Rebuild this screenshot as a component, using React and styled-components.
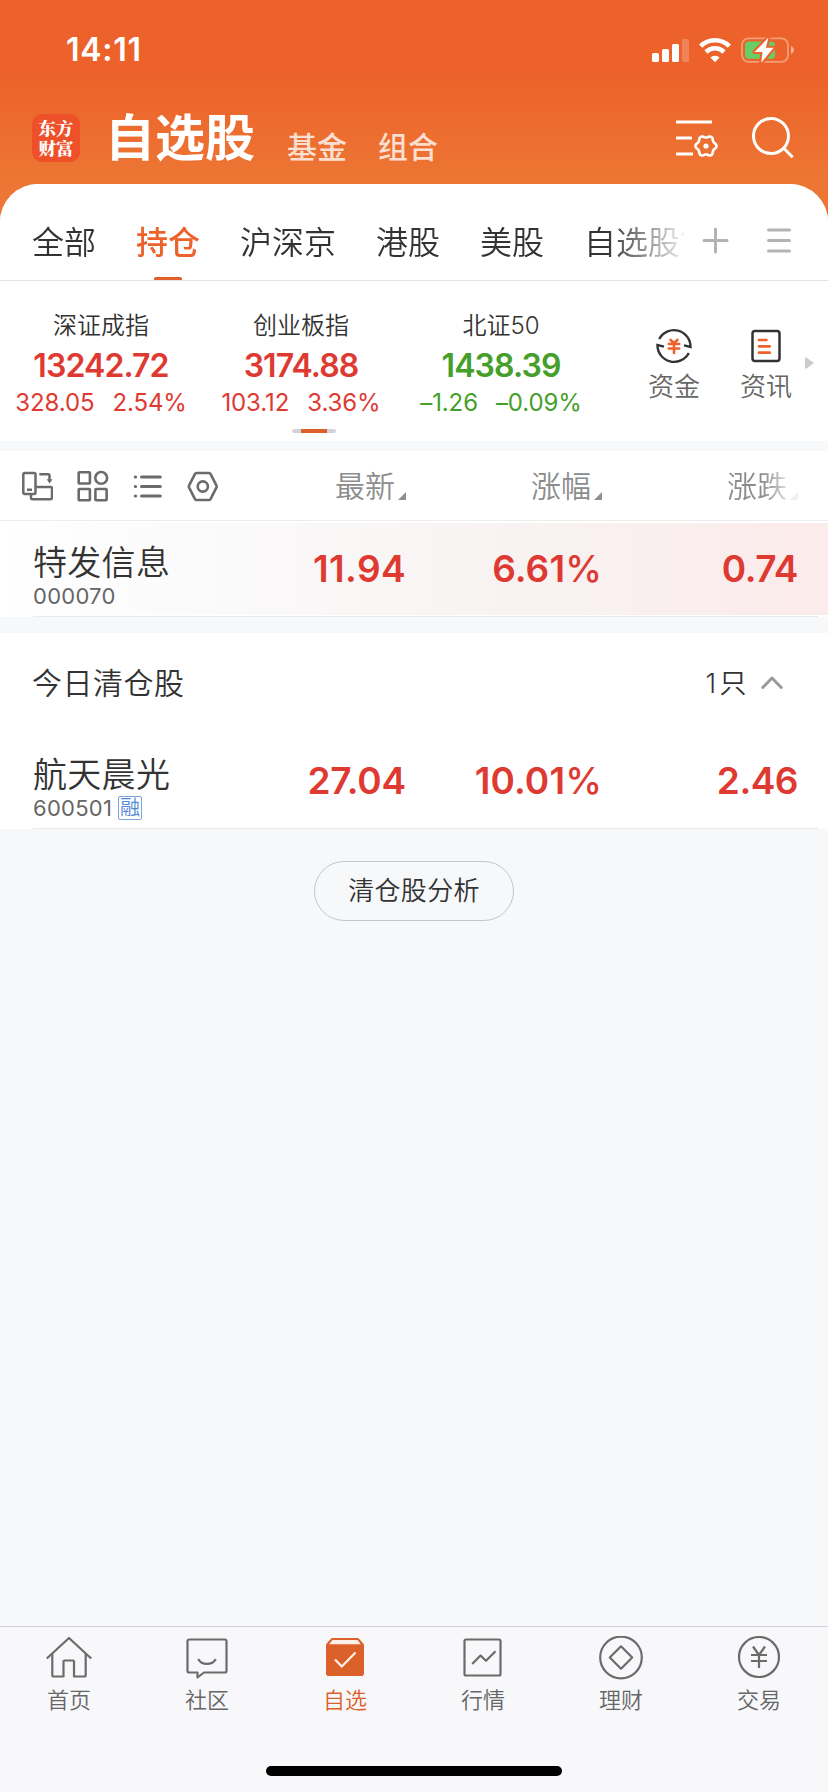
import React from "react";
import styled, { createGlobalStyle } from "styled-components";

const RED = "#de3a32";
const GREEN = "#469f2b";
const ORANGE = "#ec622a";

const GlobalStyle = createGlobalStyle`
  * { box-sizing: border-box; }
  body {
    margin: 0;
    background: #f7f8fa;
    font-family: Inter, "Noto Sans CJK SC", sans-serif;
    color: #333;
  }
  svg { display: block; flex: none; }
`;

const Screen = styled.div`
  width: 828px;
  height: 1792px;
  overflow: hidden;
  display: flex;
  flex-direction: column;
  background: linear-gradient(180deg, #ec622a 0, #ec622a 75px, #ed7634 180px, #ed7634 240px, #f7f8fa 240px);
`;

const StatusBar = styled.div`
  height: 99px;
  padding: 0 34px 0 66px;
  display: flex;
  align-items: center;
  justify-content: space-between;
`;

const Clock = styled.div`
  font-size: 32px;
  line-height: 40px;
  font-weight: 560;
  letter-spacing: 0.7px;
  padding-top: 1px;
  color: #fff;
`;

const StatusIcons = styled.div`
  display: flex;
  align-items: center;
  gap: 10px;
`;

const Header = styled.header`
  height: 85px;
  padding: 0 34px 7px 32px;
  display: flex;
  align-items: center;
`;

const Logo = styled.div`
  width: 48px;
  height: 48px;
  border-radius: 10px;
  background: #ee5029;
  color: #fff;
  font: 900 17.5px/20px "Noto Serif CJK SC", "Noto Sans CJK SC", serif;
  text-align: center;
  padding-top: 4px;
`;

const PageTitle = styled.h1`
  margin: 0 0 0 25px;
  font-size: 50px;
  line-height: 60px;
  font-weight: 700;
  color: #fff;
`;

const HeaderLink = styled.a`
  margin-left: ${(p) => p.$gap}px;
  padding-top: 18px;
  font-size: 30px;
  line-height: 40px;
  font-weight: 500;
  color: rgba(255, 255, 255, 0.78);
`;

const HeaderActions = styled.div`
  margin-left: auto;
  display: flex;
  align-items: center;
  gap: 34px;
`;

const Sheet = styled.main`
  flex: 1;
  border-radius: 38px 38px 0 0;
  background: #f7f8fa;
  overflow: hidden;
`;

const TabRow = styled.nav`
  height: 97px;
  display: flex;
  background: #fff;
  border-bottom: 1px solid #e3e3e3;
`;

const TabList = styled.div`
  width: 684px;
  padding-left: 32px;
  display: flex;
  gap: 40px;
  overflow: hidden;
  white-space: nowrap;
  mask-image: linear-gradient(90deg, #000 606px, transparent 692px);
`;

const Tab = styled.div`
  position: relative;
  flex: none;
  height: 97px;
  font-size: 32px;
  line-height: 117px;
  font-weight: ${(p) => (p.$active ? 500 : 350)};
  color: ${(p) => (p.$active ? ORANGE : "#333")};
  &::after {
    content: "";
    display: ${(p) => (p.$active ? "block" : "none")};
    position: absolute;
    left: 18px;
    bottom: 0;
    width: 28px;
    height: 4px;
    border-radius: 2px 2px 0 0;
    background: #e0602a;
  }
`;

const TabTools = styled.div`
  display: flex;
  align-items: center;
  gap: 38px;
  padding: 16px 0 0 18px;
`;

const IndexStrip = styled.section`
  height: 160px;
  display: flex;
  background: #fff;
`;

const IndexList = styled.div`
  width: 628px;
  display: grid;
  grid-template-columns: 200px 200px 200px;
  grid-template-rows: 148px 4px;
  padding-left: 1px;
`;

const IndexCard = styled.div`
  padding-top: 29px;
  display: flex;
  flex-direction: column;
  align-items: center;
  color: ${(p) => (p.$down ? GREEN : RED)};
`;

const IndexName = styled.div`
  font-size: 24px;
  line-height: 32px;
  font-weight: 350;
  color: #333;
`;

const IndexValue = styled.div`
  margin-top: 4px;
  font-size: 32px;
  line-height: 40px;
  font-weight: 600;
  letter-spacing: -0.9px;
`;

const IndexChange = styled.div`
  margin-top: 1px;
  display: flex;
  gap: 18px;
  font-size: 24px;
  line-height: 32px;
  font-weight: 390;
  letter-spacing: -0.1px;
`;

const Pager = styled.div`
  grid-column: 1 / -1;
  margin-left: 291px;
  width: 44px;
  height: 4px;
  border-radius: 2px;
  background: linear-gradient(90deg, #d3d3dc 9px, #dc6029 9px, #dc6029 35px, #d3d3dc 35px);
`;

const Shortcuts = styled.div`
  display: flex;
  align-items: center;
  padding-top: 9px;
`;

const Shortcut = styled.div`
  width: 92px;
  display: flex;
  flex-direction: column;
  align-items: center;
  gap: 4px;
  font-size: 26px;
  line-height: 36px;
  font-weight: 350;
  color: #666;
`;

const ArrowSlot = styled.div`
  margin-left: -8px;
  display: flex;
  align-items: center;
  padding-top: 4px;
`;

const Divider = styled.div`
  height: ${(p) => p.$size}px;
  background: #f6f8fa;
`;

const columns = "210px 196px 196px 196px";

const TableHead = styled.div`
  height: 70px;
  display: grid;
  grid-template-columns: ${columns};
  align-items: center;
  background: #fff;
  border-bottom: 1px solid #ececec;
`;

const ViewTools = styled.div`
  display: flex;
  align-items: center;
  gap: 24px;
  padding-left: 21px;
`;

const HeadCell = styled.div`
  display: flex;
  align-items: center;
  justify-content: flex-end;
  gap: 3px;
  font-size: 30px;
  line-height: 40px;
  padding-top: 1px;
  font-weight: 350;
  color: #8c8c8c;
  mask-image: ${(p) => (p.$fade ? "linear-gradient(90deg, #000 160px, rgba(0,0,0,0.12) 192px)" : "none")};
  &::after {
    content: "";
    margin-top: 20px;
    border-left: 8px solid transparent;
    border-bottom: 8px solid #8f8f94;
  }
`;

const StockRow = styled.div`
  height: 96px;
  padding: 2px 0 1px;
  background: #fff;
`;

const StockBody = styled.div`
  height: 92px;
  display: grid;
  grid-template-columns: ${columns};
  align-items: center;
  background: ${(p) => (p.$highlight ? "linear-gradient(90deg, #fff 0, #faf8f8 35%, #f8f3f2 62%, #fbecec 93%, #fbebea 100%)" : "#fff")};
`;

const RowRule = styled.div`
  height: 1px;
  margin: 1px 10px 0 33px;
  background: #eaeaea;
`;

const StockInfo = styled.div`
  padding: 13px 0 0 33px;
  white-space: nowrap;
`;

const StockName = styled.div`
  font-size: 34px;
  line-height: 40px;
  font-weight: 350;
  letter-spacing: 0.3px;
`;

const StockCode = styled.div`
  height: 26px;
  display: flex;
  align-items: center;
  gap: 6px;
  font-size: 22px;
  line-height: 26px;
  font-weight: 400;
  letter-spacing: 0.25px;
  color: #666;
`;

const MarginBadge = styled.span`
  width: 24px;
  height: 24px;
  border: 1px solid #7ba4e0;
  border-radius: 2px;
  font-size: 20px;
  line-height: 22px;
  font-weight: 350;
  letter-spacing: 0;
  color: #4f86d8;
  display: flex;
  justify-content: center;
`;

const Quote = styled.div`
  text-align: right;
  font-size: 37px;
  line-height: 44px;
  font-weight: 600;
  letter-spacing: ${(p) => p.$tracking ?? -0.2}px;
  color: ${RED};
`;

const Percent = styled.span`
  font-weight: 500;
`;

const SectionHead = styled.div`
  height: 100px;
  padding: 0 45px 0 32px;
  display: flex;
  align-items: center;
  background: #fff;
  font-size: 30px;
  line-height: 40px;
  font-weight: 350;
  letter-spacing: 0.5px;
`;

const SectionCount = styled.div`
  margin-left: auto;
  margin-right: 11px;
  padding-top: 1px;
  font-size: 27px;
  letter-spacing: 3.4px;
`;

const ActionRow = styled.div`
  padding-top: 32px;
  display: flex;
  justify-content: center;
`;

const PillButton = styled.button`
  width: 200px;
  height: 60px;
  padding: 0;
  border: 1px solid #c4c5c8;
  border-radius: 30px;
  background: transparent;
  font: 350 26px/40px Inter, "Noto Sans CJK SC", sans-serif;
  letter-spacing: 0.3px;
  color: #333;
`;

const BottomNav = styled.nav`
  height: 166px;
  border-top: 1px solid #d3d3de;
  background: #f8f8fb;
  display: flex;
  flex-direction: column;
  align-items: center;
`;

const NavItems = styled.div`
  width: 100%;
  display: grid;
  grid-template-columns: repeat(6, 1fr);
  height: 139px;
`;

const NavItem = styled.a`
  padding-top: 9px;
  display: flex;
  flex-direction: column;
  align-items: center;
  gap: 5px;
  font-size: 22px;
  line-height: 30px;
  font-weight: 350;
  color: ${(p) => (p.$active ? "#dc6029" : "#666")};
`;

const HomeIndicator = styled.div`
  width: 296px;
  height: 10px;
  border-radius: 5px;
  background: #000;
`;

const SignalIcon = () => (
  <svg width="37" height="26" fill="#fff">
    <rect x="0" y="16" width="7" height="9" rx="1.6" />
    <rect x="10" y="12" width="7" height="13" rx="1.6" />
    <rect x="20" y="7" width="7" height="18" rx="1.6" />
    <rect x="30" y="2" width="7" height="23" rx="1.6" opacity="0.22" />
  </svg>
);

const WifiIcon = () => (
  <svg width="32" height="26" fill="none" stroke="#fff" strokeWidth="4.6">
    <path d="M1.6 9.2a20.5 20.5 0 0 1 28.8 0" />
    <path d="M7 15a12.8 12.8 0 0 1 18 0" />
    <path d="M16 25.200l-4.600-4.700a6.600 6.600 0 0 1 9.200 0z" fill="#fff" stroke="none" />
  </svg>
);

const BatteryIcon = () => (
  <svg width="53" height="28">
    <rect x="1" y="2.400" width="46" height="23.400" rx="6.500" fill="none" stroke="#fff" strokeOpacity="0.38" strokeWidth="1.800" />
    <path d="M50 10v8c1.800-.8 3-2.300 3-4s-1.200-3.200-3-4z" fill="#fff" fillOpacity="0.5" />
    <rect x="4" y="5.500" width="30" height="17.300" rx="3.500" fill="#67ce67" />
    <path d="M27.500 1.500L13.500 16h8L20.200 26.800 32.700 11.700h-7.800z" fill="#fff" stroke={ORANGE} strokeWidth="4" strokeLinejoin="round" paintOrder="stroke" />
  </svg>
);

const gearOutline =
  Array.from({ length: 72 }, (_, i) => {
    const a = (i * Math.PI) / 36;
    const r = 9.5 + 1.05 * Math.cos(6 * a);
    return `${i ? "L" : "M"}${(30 + r * Math.cos(a)).toFixed(2)} ${(27 + r * Math.sin(a)).toFixed(2)}`;
  }).join("") + "Z";

const ListGearIcon = () => (
  <svg width="42" height="38" fill="none" stroke="#fff" strokeWidth="3">
    <path d="M0 3h36M0 19h16M0 35h17" />
    <path d={gearOutline} strokeWidth="2.600" strokeLinejoin="round" />
    <circle cx="30" cy="27" r="2.600" fill="#fff" stroke="none" />
  </svg>
);

const SearchIcon = () => (
  <svg width="42" height="42" fill="none" stroke="#fff" strokeWidth="3">
    <circle cx="19" cy="19" r="17.500" />
    <path d="M31.500 31l9.200 9.200" />
  </svg>
);

const PlusIcon = () => (
  <svg width="27" height="27" stroke="#b3b3b3" strokeWidth="3" strokeLinecap="round">
    <path d="M2 13.500h23M13.500 2v23" />
  </svg>
);

const MenuIcon = () => (
  <svg width="24" height="27" stroke="#b3b3b3" strokeWidth="3" strokeLinecap="round">
    <path d="M1.500 3h21M1.500 13.500h21M1.500 24h21" />
  </svg>
);

const FundsIcon = () => (
  <svg width="38" height="38" fill="none" stroke="#333" strokeWidth="2.400">
    <path d="M4.200 12A16.600 16.600 0 0 1 35.500 20l-6.500-1.700" />
    <path d="M33.800 26A16.600 16.600 0 0 1 2.500 18l6.500 1.700" />
    <path d="M15.600 12.800l3.400 3.700 3.400-3.700M13.800 17h10.400M13.800 21.500h10.400M19 16.500v9.500" stroke={ORANGE} strokeWidth="2.600" strokeLinecap="round" />
  </svg>
);

const NewsIcon = () => (
  <svg width="30" height="38" fill="none" strokeLinecap="round">
    <rect x="1.500" y="4" width="27" height="30" rx="2.500" stroke="#333" strokeWidth="2.500" />
    <path d="M8 13h7.500M8 19.300h10.700M8 25.700h10.700" stroke={ORANGE} strokeWidth="2.700" />
  </svg>
);

const ArrowRight = () => (
  <svg width="10" height="14" fill="#ccc">
    <path d="M1 2.200Q1 .6 2.400 1.500L9.300 6.400Q10 7 9.300 7.600L2.400 12.500Q1 13.400 1 11.800z" />
  </svg>
);

const RotateIcon = () => (
  <svg width="32" height="32" fill="none" stroke="#6b6b6b" strokeWidth="2.500" strokeLinejoin="round">
    <rect x="2.300" y="3" width="12.200" height="21" rx="1.500" />
    <path d="M6 19.800h5M10 24.500v3.200q0 1.500 1.500 1.500h18q1.500 0 1.500-1.500V18.500q0-1.500-1.500-1.500H15" />
    <path d="M18.300 4.300h9q1.200 0 1.200 1.200v5.500" />
    <path d="M25.700 9.300h5.800l-2.900 4.300z" fill="#6b6b6b" stroke="none" />
  </svg>
);

const GridIcon = () => (
  <svg width="32" height="32" fill="none" stroke="#6b6b6b" strokeWidth="2.600">
    <rect x="1.700" y="2.300" width="11.200" height="11.200" rx="0.800" />
    <circle cx="24.200" cy="7.900" r="5.900" />
    <rect x="1.700" y="19" width="11.200" height="11.200" rx="0.800" />
    <rect x="18.400" y="19" width="11.200" height="11.200" rx="0.800" />
  </svg>
);

const ListIcon = () => (
  <svg width="30" height="32" stroke="#6b6b6b" strokeWidth="3" strokeLinecap="round">
    <path d="M8.500 7h18.800M8.500 16.500h18.800M8.500 26h18.800M2.300 7h.3M2.300 16.500h.3M2.300 26h.3" />
  </svg>
);

const HexIcon = () => (
  <svg width="32" height="32" fill="none" stroke="#6b6b6b" strokeWidth="2.600" strokeLinejoin="round">
    <path d="M9.500 3h12.500q1 0 1.500.9l6 11.700q.5.900 0 1.800l-6 11.700q-.5.900-1.500.9H9.500q-1 0-1.500-.9L2 17.400q-.5-.9 0-1.800L8 3.900q.5-.9 1.500-.9z" />
    <circle cx="15.800" cy="16.500" r="5.100" />
  </svg>
);

const ChevronUp = () => (
  <svg width="22" height="16" fill="none" stroke="#999" strokeWidth="3" strokeLinecap="round" strokeLinejoin="round">
    <path d="M1.800 12.500L11 3 20.200 12.500" />
  </svg>
);

const NavSvg = styled.svg.attrs({
  width: 46,
  height: 44,
  viewBox: "0 0 46 44",
  fill: "none",
  stroke: "#6b6b6b",
  strokeWidth: 2.2,
  strokeLinejoin: "round",
})``;

const HomeIcon = () => (
  <NavSvg>
    <path d="M.8 22.500L23 2l22.200 20.500" />
    <path d="M6.300 18v21q0 1.500 1.500 1.500H17.500V25.500q0-1 1-1h8.500q1 0 1 1v15h10.200q1.500 0 1.500-1.500V18" />
  </NavSvg>
);

const CommunityIcon = () => (
  <NavSvg>
    <path d="M5.300 3.500h35.400q1.800 0 1.800 1.800v29.400q0 1.800-1.800 1.800H20l-6.500 5v-5H5.300q-1.800 0-1.800-1.800V5.300q0-1.800 1.800-1.800z" />
    <path d="M14.200 23c3.600 6.600 14 6.600 17.600 0" />
  </NavSvg>
);

const WatchIcon = () => (
  <NavSvg>
    <path d="M10.500 2h25q.8 0 1.300.6l4.700 5.200q.5.600.5 1.400v28q0 2.800-2.800 2.800H6.800Q4 40 4 37.200v-28q0-.8.500-1.400l4.700-5.200q.5-.6 1.300-.6z" fill="#dc6029" stroke="none" />
    <path d="M10.500 4h25l3.300 4.300H7.200z" fill="#fff1ea" stroke="none" />
    <path d="M13 23.500l6.800 7L33.500 16.500" stroke="#fff1ea" />
  </NavSvg>
);

const MarketIcon = () => (
  <NavSvg>
    <rect x="4.500" y="3.500" width="36" height="36" rx="1.500" />
    <path d="M12.200 28l8.300-8.500 5.500 5.300 9.500-9.500" />
  </NavSvg>
);

const WealthIcon = () => (
  <NavSvg>
    <circle cx="23" cy="21.500" r="20.800" />
    <path d="M23 10.300L34.200 21.500 23 32.700 11.800 21.500z" />
  </NavSvg>
);

const TradeIcon = () => (
  <NavSvg>
    <circle cx="23" cy="21" r="20" />
    <path d="M17 10.500l6 8.500 6-8.500M15 19h16M15 25h16M23 19v13" />
  </NavSvg>
);

const tabs = ["全部", "持仓", "沪深京", "港股", "美股", "自选股1"];

const indices = [
  { name: "深证成指", value: "13242.72", change: "328.05", rate: "2.54%" },
  { name: "创业板指", value: "3174.88", change: "103.12", rate: "3.36%" },
  { name: "北证50", value: "1438.39", change: "–1.26", rate: "–0.09%", down: true },
];

const navItems = [
  { label: "首页", Icon: HomeIcon },
  { label: "社区", Icon: CommunityIcon },
  { label: "自选", Icon: WatchIcon, active: true },
  { label: "行情", Icon: MarketIcon },
  { label: "理财", Icon: WealthIcon },
  { label: "交易", Icon: TradeIcon },
];

function Stock({ name, code, badge, price, priceTracking, rate, diff, highlight }) {
  return (
    <StockRow>
      <StockBody $highlight={highlight}>
        <StockInfo>
          <StockName>{name}</StockName>
          <StockCode>
            {code}
            {badge && <MarginBadge>{badge}</MarginBadge>}
          </StockCode>
        </StockInfo>
        <Quote $tracking={priceTracking}>{price}</Quote>
        <Quote $tracking={0.1}>
          {rate}
          <Percent>%</Percent>
        </Quote>
        <Quote $tracking={-0.5}>{diff}</Quote>
      </StockBody>
      <RowRule />
    </StockRow>
  );
}

export default function App() {
  return (
    <>
      <GlobalStyle />
      <Screen>
        <StatusBar>
          <Clock>14:11</Clock>
          <StatusIcons>
            <SignalIcon />
            <WifiIcon />
            <BatteryIcon />
          </StatusIcons>
        </StatusBar>
        <Header>
          <Logo>
            东方
            <br />
            财富
          </Logo>
          <PageTitle>自选股</PageTitle>
          <HeaderLink $gap={32}>基金</HeaderLink>
          <HeaderLink $gap={31}>组合</HeaderLink>
          <HeaderActions>
            <ListGearIcon />
            <SearchIcon />
          </HeaderActions>
        </Header>
        <Sheet>
          <TabRow>
            <TabList>
              {tabs.map((t, i) => (
                <Tab key={t} $active={i === 1}>
                  {t}
                </Tab>
              ))}
            </TabList>
            <TabTools>
              <PlusIcon />
              <MenuIcon />
            </TabTools>
          </TabRow>
          <IndexStrip>
            <IndexList>
              {indices.map((x) => (
                <IndexCard key={x.name} $down={x.down}>
                  <IndexName>{x.name}</IndexName>
                  <IndexValue>{x.value}</IndexValue>
                  <IndexChange>
                    <span>{x.change}</span>
                    <span>{x.rate}</span>
                  </IndexChange>
                </IndexCard>
              ))}
              <Pager />
            </IndexList>
            <Shortcuts>
              <Shortcut>
                <FundsIcon />
                资金
              </Shortcut>
              <Shortcut>
                <NewsIcon />
                资讯
              </Shortcut>
            </Shortcuts>
            <ArrowSlot>
              <ArrowRight />
            </ArrowSlot>
          </IndexStrip>
          <Divider $size={10} />
          <TableHead>
            <ViewTools>
              <RotateIcon />
              <GridIcon />
              <ListIcon />
              <HexIcon />
            </ViewTools>
            <HeadCell>最新</HeadCell>
            <HeadCell>涨幅</HeadCell>
            <HeadCell $fade>涨跌</HeadCell>
          </TableHead>
          <Stock name="特发信息" code="000070" price="11.94" priceTracking={0.4} rate="6.61" diff="0.74" highlight />
          <Divider $size={16} />
          <SectionHead>
            今日清仓股
            <SectionCount>1只</SectionCount>
            <ChevronUp />
          </SectionHead>
          <Stock name="航天晨光" code="600501" badge="融" price="27.04" rate="10.01" diff="2.46" />
          <ActionRow>
            <PillButton>清仓股分析</PillButton>
          </ActionRow>
        </Sheet>
        <BottomNav>
          <NavItems>
            {navItems.map(({ label, Icon, active }) => (
              <NavItem key={label} $active={active}>
                <Icon />
                {label}
              </NavItem>
            ))}
          </NavItems>
          <HomeIndicator />
        </BottomNav>
      </Screen>
    </>
  );
}
